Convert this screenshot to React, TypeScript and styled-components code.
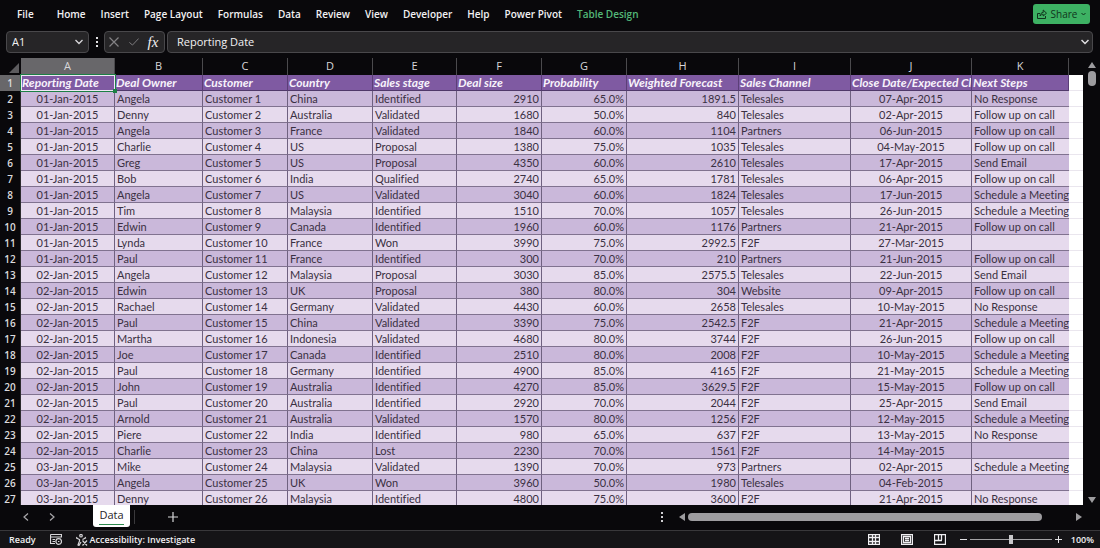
import React from "react";
import styled, { createGlobalStyle, css } from "styled-components";

const GlobalStyle = createGlobalStyle`
  *, *::before, *::after { box-sizing: border-box; }
  html, body { margin: 0; background: #09080b; }
  button, input { font: inherit; color: inherit; }
  button { padding: 0; border: 0; background: none; display: inline-flex; align-items: center; justify-content: center; }
  svg { display: block; }
`;

const UI_FONT = `"Open Sans", "Noto Sans", sans-serif`;
const CELL_FONT = `Lato, "Open Sans", sans-serif`;

const Workbook = styled.div`
  display: flex;
  flex-direction: column;
  height: 100vh;
  overflow: hidden;
  background: #09080b;
  color: #f0eff1;
  font: 11px/14px ${UI_FONT};
`;

const Ribbon = styled.header`
  display: flex;
  align-items: center;
  justify-content: space-between;
  height: 31px;
  padding: 0 10px 4px 17px;
  flex: none;
`;

const RibbonTabs = styled.nav`
  display: flex;
  gap: 15px;
`;

const RibbonTab = styled.button<{ $contextual?: boolean; $first?: boolean }>`
  font-size: 10px;
  font-weight: 600;
  white-space: nowrap;
  margin-right: ${(p) => (p.$first ? "8px" : "0")};
  color: ${(p) => (p.$contextual ? "#53b878" : "#f2f1f3")};
`;

const ShareButton = styled.button`
  gap: 4px;
  width: 57px;
  height: 20px;
  border-radius: 3px;
  background: #3db163;
  color: #10331c;
  font-size: 10px;
`;

const FormulaBar = styled.div`
  display: flex;
  flex: none;
  height: 27px;
  padding: 0 7px 5px 6px;
`;

const barBox = css`
  display: flex;
  align-items: center;
  height: 22px;
  border: 1px solid #49484b;
  border-radius: 4px;
  background: #262527;
`;

const NameBox = styled.div`
  ${barBox}
  width: 83px;
  padding: 0 4px 0 5px;
`;

const BarInput = styled.input`
  flex: 1;
  min-width: 0;
  padding: 0;
  border: 0;
  outline: 0;
  background: none;
  color: #f2f1f3;
`;

const BarDots = styled.div`
  display: flex;
  align-items: center;
  justify-content: center;
  width: 15px;
`;

const FormulaTools = styled.div`
  ${barBox}
  justify-content: space-between;
  width: 61px;
  margin-right: 2px;
  padding: 0 6px 0 4px;
`;

const FormulaField = styled.div`
  ${barBox}
  flex: 1;
  padding: 0 2px 0 9px;
`;

const FxLabel = styled.span`
  font: italic 15px/16px "Liberation Serif", serif;
`;

const GridArea = styled.main`
  display: flex;
  flex: 1;
  min-height: 0;
`;

const SheetView = styled.div`
  flex: 1;
  min-width: 0;
  overflow: hidden;
`;

const Sheet = styled.table`
  width: 100%;
  table-layout: fixed;
  border-collapse: separate;
  border-spacing: 0;
  font: 11px/14px ${CELL_FONT};
  font-variant-ligatures: none;
  color: #3a3042;
`;

const SelectAll = styled.td`
  padding: 0 2px 2px 0;
  vertical-align: bottom;
`;

const Corner = styled.svg`
  margin-left: auto;
`;

const ColumnLetter = styled.th<{ $active?: boolean }>`
  height: 17px;
  padding: 0;
  border-right: 1px solid #4b4a4d;
  font: 11px/15px ${UI_FONT};
  vertical-align: top;
  color: #d8d7da;
  background: ${(p) => (p.$active ? "#68676a" : "transparent")};
`;

const RowNumber = styled.th<{ $active?: boolean }>`
  height: 16px;
  padding: 0;
  border-right: 1px solid #2b2a2d;
  font: 600 10px/15px ${UI_FONT};
  color: #dcdbde;
  background: ${(p) => (p.$active ? "#68676a" : "#09080b")};
`;

const HeadCell = styled.td<{ $active?: boolean }>`
  position: relative;
  height: 16px;
  padding: 0 0 0 1px;
  border-right: 1px solid #5b3f78;
  border-bottom: 1px solid #4f3869;
  background: #7f5aa2;
  color: #f7f2fb;
  font-size: 12px;
  font-weight: 700;
  font-style: italic;
  white-space: nowrap;
  overflow: ${(p) => (p.$active ? "visible" : "hidden")};
  z-index: ${(p) => (p.$active ? 1 : "auto")};
`;

const Selection = styled.span`
  position: absolute;
  inset: -1px -2px -2px -1px;
  border: 1px solid #1c8045;
  box-shadow: inset 0 0 0 1px #efe8f5;

  &::after {
    content: "";
    position: absolute;
    right: -2px;
    bottom: -2px;
    width: 4px;
    height: 4px;
    background: #1c8045;
  }
`;

type Align = "left" | "right" | "center";

const Cell = styled.td<{ $align: Align; $last?: boolean }>`
  height: 16px;
  padding: 1px 2px 0 2px;
  border-right: ${(p) => (p.$last ? "0" : "1px solid #6f6180")};
  border-bottom: 1px solid #80728f;
  text-align: ${(p) => p.$align};
  white-space: nowrap;
  overflow: ${(p) => (p.$last ? "visible" : "hidden")};
  line-height: 14px;
`;

const Blank = styled.td`
  border-bottom: 1px solid #eae6ee;
  background: #ffffff;
`;

const Row = styled.tr<{ $band: boolean }>`
  ${Cell} {
    background-color: ${(p) => (p.$band ? "#cab8da" : "#e6daed")};
  }
`;

const VerticalScroll = styled.div`
  display: flex;
  flex-direction: column;
  align-items: center;
  justify-content: space-between;
  width: 17px;
  padding: 4px 0 1px;
`;

const ScrollTop = styled.div`
  display: flex;
  flex-direction: column;
  align-items: center;
  gap: 3px;
`;

const VerticalThumb = styled.div`
  width: 8px;
  height: 15px;
  border-radius: 4px;
  background: #9d9c9f;
`;

const SheetBar = styled.div`
  display: flex;
  align-items: flex-start;
  flex: none;
  height: 25px;
  padding: 0 18px 0 21px;
`;

const SheetNav = styled.div`
  display: flex;
  align-items: center;
  gap: 16px;
  height: 24px;
  margin-right: 36px;
`;

const IconButton = styled.button`
  width: 10px;
  height: 14px;
`;

const SheetTab = styled.button`
  height: 22px;
  width: 37px;
  border-radius: 0 0 3px 3px;
  background: #ffffff;
  color: #262228;
`;

const SheetTabLabel = styled.span`
  height: 18px;
  line-height: 16px;
  border-bottom: 1px solid #2c8a4d;
`;

const AddSheet = styled.button`
  width: 12px;
  height: 24px;
  margin-left: 32px;
`;

const TabDivider = styled.span`
  width: 1px;
  height: 14px;
  margin: 5px 0 0 4px;
  background: #3a393c;
`;

const HorizontalScroll = styled.div`
  display: flex;
  align-items: center;
  gap: 3px;
  width: 40%;
  height: 24px;
  margin-left: auto;
  padding-left: 3px;
`;

const HorizontalTrack = styled.div`
  flex: 1;
`;

const HorizontalThumb = styled.div`
  width: 92%;
  height: 8px;
  border-radius: 4px;
  background: #9d9c9f;
`;

const ScrollGrip = styled.div`
  width: 15px;
`;

const StatusBar = styled.footer`
  display: flex;
  align-items: center;
  flex: none;
  height: 18px;
  padding: 0 6px 0 9px;
  border-top: 1px solid #39383b;
  background: #151417;
  font-size: 9px;
  font-weight: 600;
`;

const StatusButton = styled.button`
  gap: 2px;
  margin-left: 14px;
`;

const ViewButtons = styled.div`
  display: flex;
  gap: 21px;
  margin-left: auto;
`;

const ZoomControl = styled.div`
  display: flex;
  align-items: center;
  gap: 3px;
  margin: 0 9px 0 14px;
`;

const ZoomSlider = styled.input`
  appearance: none;
  width: 82px;
  height: 11px;
  margin: 0;
  background: none;

  &::-webkit-slider-runnable-track {
    height: 1px;
    background: #a3a2a5;
  }
  &::-webkit-slider-thumb {
    appearance: none;
    width: 4px;
    height: 9px;
    margin-top: -4px;
    background: #c9c8cb;
  }
`;

const ribbonTabs = ["File", "Home", "Insert", "Page Layout", "Formulas", "Data", "Review", "View", "Developer", "Help", "Power Pivot", "Table Design"];

const columns: { letter: string; title: string; width: number; align: Align }[] = [
  { letter: "A", title: "Reporting Date", width: 94, align: "center" },
  { letter: "B", title: "Deal Owner", width: 88, align: "left" },
  { letter: "C", title: "Customer", width: 85, align: "left" },
  { letter: "D", title: "Country", width: 85, align: "left" },
  { letter: "E", title: "Sales stage", width: 84, align: "left" },
  { letter: "F", title: "Deal size", width: 85, align: "right" },
  { letter: "G", title: "Probability", width: 85, align: "right" },
  { letter: "H", title: "Weighted Forecast", width: 112, align: "right" },
  { letter: "I", title: "Sales Channel", width: 112, align: "left" },
  { letter: "J", title: "Close Date/Expected Cl", width: 121, align: "center" },
  { letter: "K", title: "Next Steps", width: 97, align: "left" },
];

const deals = `01-Jan-2015|Angela|Customer 1|China|Identified|2910|65.0%|1891.5|Telesales|07-Apr-2015|No Response
01-Jan-2015|Denny|Customer 2|Australia|Validated|1680|50.0%|840|Telesales|02-Apr-2015|Follow up on call
01-Jan-2015|Angela|Customer 3|France|Validated|1840|60.0%|1104|Partners|06-Jun-2015|Follow up on call
01-Jan-2015|Charlie|Customer 4|US|Proposal|1380|75.0%|1035|Telesales|04-May-2015|Follow up on call
01-Jan-2015|Greg|Customer 5|US|Proposal|4350|60.0%|2610|Telesales|17-Apr-2015|Send Email
01-Jan-2015|Bob|Customer 6|India|Qualified|2740|65.0%|1781|Telesales|06-Apr-2015|Follow up on call
01-Jan-2015|Angela|Customer 7|US|Validated|3040|60.0%|1824|Telesales|17-Jun-2015|Schedule a Meeting
01-Jan-2015|Tim|Customer 8|Malaysia|Identified|1510|70.0%|1057|Telesales|26-Jun-2015|Schedule a Meeting
01-Jan-2015|Edwin|Customer 9|Canada|Identified|1960|60.0%|1176|Partners|21-Apr-2015|Follow up on call
01-Jan-2015|Lynda|Customer 10|France|Won|3990|75.0%|2992.5|F2F|27-Mar-2015|
01-Jan-2015|Paul|Customer 11|France|Identified|300|70.0%|210|Partners|21-Jun-2015|Follow up on call
02-Jan-2015|Angela|Customer 12|Malaysia|Proposal|3030|85.0%|2575.5|Telesales|22-Jun-2015|Send Email
02-Jan-2015|Edwin|Customer 13|UK|Proposal|380|80.0%|304|Website|09-Apr-2015|Follow up on call
02-Jan-2015|Rachael|Customer 14|Germany|Validated|4430|60.0%|2658|Telesales|10-May-2015|No Response
02-Jan-2015|Paul|Customer 15|China|Validated|3390|75.0%|2542.5|F2F|21-Apr-2015|Schedule a Meeting
02-Jan-2015|Martha|Customer 16|Indonesia|Validated|4680|80.0%|3744|F2F|26-Jun-2015|Follow up on call
02-Jan-2015|Joe|Customer 17|Canada|Identified|2510|80.0%|2008|F2F|10-May-2015|Schedule a Meeting
02-Jan-2015|Paul|Customer 18|Germany|Identified|4900|85.0%|4165|F2F|21-May-2015|Schedule a Meeting
02-Jan-2015|John|Customer 19|Australia|Identified|4270|85.0%|3629.5|F2F|15-May-2015|Follow up on call
02-Jan-2015|Paul|Customer 20|Australia|Identified|2920|70.0%|2044|F2F|25-Apr-2015|Send Email
02-Jan-2015|Arnold|Customer 21|Australia|Validated|1570|80.0%|1256|F2F|12-May-2015|Schedule a Meeting
02-Jan-2015|Piere|Customer 22|India|Identified|980|65.0%|637|F2F|13-May-2015|No Response
02-Jan-2015|Charlie|Customer 23|China|Lost|2230|70.0%|1561|F2F|14-May-2015|
03-Jan-2015|Mike|Customer 24|Malaysia|Validated|1390|70.0%|973|Partners|02-Apr-2015|Schedule a Meeting
03-Jan-2015|Angela|Customer 25|UK|Won|3960|50.0%|1980|Telesales|04-Feb-2015|
03-Jan-2015|Denny|Customer 26|Malaysia|Identified|4800|75.0%|3600|F2F|21-Apr-2015|No Response`
  .split("\n")
  .map((line) => line.split("|"));

type StrokeProps = { d: string; w: number; h: number; color?: string; stroke?: number };

const Stroke = ({ d, w, h, color = "#d8d7da", stroke = 1 }: StrokeProps) => (
  <svg width={w} height={h} viewBox={`0 0 ${w} ${h}`} fill="none" stroke={color} strokeWidth={stroke} aria-hidden="true">
    <path d={d} />
  </svg>
);

const Solid = ({ d, w, h, color = "#9d9c9f" }: StrokeProps) => (
  <svg width={w} height={h} viewBox={`0 0 ${w} ${h}`} fill={color} aria-hidden="true">
    <path d={d} />
  </svg>
);

export default function App() {
  return (
    <>
      <GlobalStyle />
      <Workbook>
        <Ribbon>
          <RibbonTabs aria-label="Ribbon">
            {ribbonTabs.map((tab, i) => (
              <RibbonTab key={tab} $first={i === 0} $contextual={tab === "Table Design"}>
                {tab}
              </RibbonTab>
            ))}
          </RibbonTabs>
          <ShareButton>
            <Stroke w={10} h={10} color="#10331c" d="M3 4.5H0.5v5h8V7M3 7C3.200 4.800 4.500 3.500 6.200 3.500V1L9.500 4.200L6.200 7V5.300C5 5.300 4 5.800 3 7Z" />
            Share
            <Stroke w={5} h={4} color="#10331c" d="M0.500 1L2.500 3L4.500 1" />
          </ShareButton>
        </Ribbon>

        <FormulaBar>
          <NameBox>
            <BarInput aria-label="Name box" defaultValue="A1" />
            <IconButton aria-label="Open name list">
              <Stroke w={8} h={6} stroke={1.3} d="M0.500 1L4 4.500L7.500 1" />
            </IconButton>
          </NameBox>
          <BarDots>
            <Solid w={2} h={10} color="#e2e1e4" d="M0 0h2v2H0zM0 4h2v2H0zM0 8h2v2H0z" />
          </BarDots>
          <FormulaTools>
            <IconButton aria-label="Cancel">
              <Stroke w={10} h={10} color="#838285" stroke={1.2} d="M0.500 0.500L9.500 9.500M9.500 0.500L0.500 9.500" />
            </IconButton>
            <IconButton aria-label="Enter">
              <Stroke w={13} h={10} color="#838285" stroke={1.2} d="M0.500 5.500L4.500 9L12.500 0.500" />
            </IconButton>
            <IconButton aria-label="Insert function">
              <FxLabel>fx</FxLabel>
            </IconButton>
          </FormulaTools>
          <FormulaField>
            <BarInput aria-label="Formula bar" defaultValue="Reporting Date" />
            <IconButton aria-label="Expand formula bar">
              <Stroke w={8} h={6} color="#e2e1e4" stroke={1.5} d="M0.500 1L4 4.500L7.500 1" />
            </IconButton>
          </FormulaField>
        </FormulaBar>

        <GridArea>
          <SheetView>
            <Sheet>
              <colgroup>
                <col style={{ width: 21 }} />
                {columns.map((c) => (
                  <col key={c.letter} style={{ width: c.width }} />
                ))}
                <col />
              </colgroup>
              <thead>
                <tr>
                  <SelectAll>
                    <Corner width="10" height="10" viewBox="0 0 10 10" fill="#5c5b5e" aria-hidden="true">
                      <path d="M10 0V10H0Z" />
                    </Corner>
                  </SelectAll>
                  {columns.map((c) => (
                    <ColumnLetter key={c.letter} scope="col" $active={c.letter === "A"}>
                      {c.letter}
                    </ColumnLetter>
                  ))}
                  <td />
                </tr>
              </thead>
              <tbody>
                <tr>
                  <RowNumber scope="row" $active>
                    1
                  </RowNumber>
                  {columns.map((c) => (
                    <HeadCell key={c.letter} $active={c.letter === "A"}>
                      {c.title}
                      {c.letter === "A" && <Selection />}
                    </HeadCell>
                  ))}
                  <Blank />
                </tr>
                {deals.map((deal, r) => (
                  <Row key={r} $band={r % 2 === 0}>
                    <RowNumber scope="row">{r + 2}</RowNumber>
                    {columns.map((c, i) => (
                      <Cell key={c.letter} $align={c.align} $last={i === columns.length - 1}>
                        {deal[i]}
                      </Cell>
                    ))}
                    <Blank />
                  </Row>
                ))}
              </tbody>
            </Sheet>
          </SheetView>
          <VerticalScroll>
            <ScrollTop>
              <Solid w={8} h={6} d="M4 0L8 6H0Z" />
              <VerticalThumb />
            </ScrollTop>
            <Solid w={8} h={7} d="M0 0H8L4 6Z" />
          </VerticalScroll>
        </GridArea>

        <SheetBar>
          <SheetNav>
            <IconButton aria-label="Previous sheet">
              <Stroke w={6} h={8} color="#a9a8ab" stroke={1.2} d="M5 0.500L1 4L5 7.500" />
            </IconButton>
            <IconButton aria-label="Next sheet">
              <Stroke w={6} h={8} color="#a9a8ab" stroke={1.2} d="M1 0.500L5 4L1 7.500" />
            </IconButton>
          </SheetNav>
          <SheetTab>
            <SheetTabLabel>Data</SheetTabLabel>
          </SheetTab>
          <TabDivider />
          <AddSheet aria-label="New sheet">
            <Stroke w={10} h={10} stroke={1.2} d="M5 0V10M0 5H10" />
          </AddSheet>
          <HorizontalScroll>
            <ScrollGrip>
              <Solid w={2} h={10} color="#d0cfd2" d="M0 0h2v2H0zM0 4h2v2H0zM0 8h2v2H0z" />
            </ScrollGrip>
            <Solid w={6} h={8} d="M6 0V8L0 4Z" />
            <HorizontalTrack>
              <HorizontalThumb />
            </HorizontalTrack>
            <Solid w={6} h={8} d="M0 0V8L6 4Z" />
          </HorizontalScroll>
        </SheetBar>

        <StatusBar>
          <span>Ready</span>
          <StatusButton aria-label="Record macro">
            <Stroke w={12} h={11} stroke={1.2} d="M0.500 0.500H11.500V3.500M0.500 0.500V9.500H5M0.500 3H11.500M2.500 5.500H5M2.500 7.500H5M11.500 7.500A2.800 2.800 0 1 1 5.900 7.500A2.800 2.800 0 1 1 11.500 7.500M8 7.500H9.400" />
          </StatusButton>
          <StatusButton>
            <Stroke w={12} h={12} stroke={1.2} d="M5 0.500A1.200 1.200 0 1 1 5 3A1.200 1.200 0 1 1 5 0.500M1 3L0.500 4L3.500 5.500V7L2 11L3 11.500L5 8M9 3L9.500 4L6.500 5.500M6.500 6.500L11 11.500M11 6.500L6.500 11.500" />
            Accessibility: Investigate
          </StatusButton>
          <ViewButtons>
            <button aria-label="Normal view">
              <Stroke w={12} h={11} stroke={1.3} color="#f0eff2" d="M0.500 0.500H11.500V10.500H0.500ZM4.500 0V11M7.500 0V11M0 3.500H12M0 7.500H12" />
            </button>
            <button aria-label="Page layout view">
              <Stroke w={12} h={11} stroke={1.3} color="#f0eff2" d="M0.500 0.500H11.500V10.500H0.500ZM2.500 2.500H9.500V8.500H2.500ZM4 4.500H8M4 6.500H8" />
            </button>
            <button aria-label="Page break view">
              <Stroke w={12} h={11} stroke={1.3} color="#f0eff2" d="M0.500 0.500H11.500V10.500H0.500ZM4.500 0V6M7.500 0V6M0 6.500H8" />
            </button>
          </ViewButtons>
          <ZoomControl>
            <button aria-label="Zoom out">
              <Stroke w={7} h={7} color="#e2e1e4" d="M0 3.500H7" />
            </button>
            <ZoomSlider type="range" aria-label="Zoom" defaultValue={50} />
            <button aria-label="Zoom in">
              <Stroke w={7} h={7} color="#e2e1e4" d="M0 3.500H7M3.500 0V7" />
            </button>
          </ZoomControl>
          <span>100%</span>
        </StatusBar>
      </Workbook>
    </>
  );
}
